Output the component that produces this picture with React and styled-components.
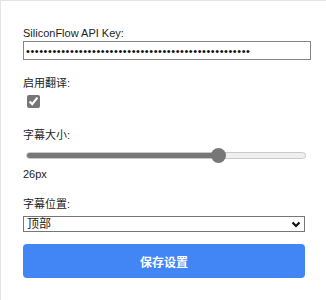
import React, { useState } from "react"
import styled, { createGlobalStyle } from "styled-components"

const GlobalStyle = createGlobalStyle`
  html, body {
    margin: 0;
    background: #fff;
  }
  body {
    font-family: "Liberation Sans", "Noto Sans CJK SC", sans-serif;
    font-size: 11px;
    color: #222;
    border-left: 1px solid #e4e4e4;
    border-top: 1px solid #e4e4e4;
    min-height: 299px;
  }
`

const Panel = styled.div`
  padding: 24px 21px 20px 22px;
`

const Group = styled.div`
  display: flex;
  flex-direction: column;
  align-items: flex-start;
  margin-bottom: ${p => p.$gap || 15}px;
`

const Label = styled.label`
  display: block;
  line-height: 16px;
  height: 16px;
`

const KeyInput = styled.input`
  width: 100%;
  height: 15px;
  padding: 1px 2px;
  margin: 0;
  border: 1px solid #858585;
  font-family: "Liberation Sans", sans-serif;
  font-size: 11px;
  color: #111;
  letter-spacing: 0.55px;
  outline: none;
`

const Check = styled.input`
  width: 13px;
  height: 13px;
  margin: 4px 3px 3px 4px;
  accent-color: #767676;
`

const Slider = styled.input`
  -webkit-appearance: none;
  appearance: none;
  width: 280px;
  height: 16px;
  margin: 4px 0 0 3px;
  background: transparent;
  outline: none;

  &::-webkit-slider-runnable-track {
    height: 7px;
    border-radius: 4px;
    border: 1px solid #c9c9c9;
    background: linear-gradient(to right, #777 0, #777 var(--fill), #efefef var(--fill), #efefef 100%);
  }
  &::-webkit-slider-thumb {
    -webkit-appearance: none;
    width: 15px;
    height: 15px;
    border-radius: 50%;
    background: #777;
    margin-top: -5px;
    border: none;
  }
`

const Value = styled.div`
  line-height: 16px;
  margin-top: 3px;
`

const SelectWrap = styled.div`
  position: relative;
  width: 100%;
  margin-top: 4px;
`

const Select = styled.select`
  -webkit-appearance: none;
  appearance: none;
  width: 100%;
  height: 16px;
  margin: 0;
  padding: 0 0 0 3px;
  border: 1px solid #767676;
  border-radius: 0;
  background: #fff;
  font-family: "Liberation Sans", "Noto Sans CJK SC", sans-serif;
  font-size: 12px;
  line-height: 14px;
  color: #222;
  outline: none;
`

const Chevron = styled.svg`
  position: absolute;
  right: 4px;
  top: 5px;
  pointer-events: none;
`

const SaveButton = styled.button`
  display: block;
  width: 100%;
  height: 34px;
  border: none;
  border-radius: 4px;
  background: #4285f4;
  color: #fff;
  font-family: "Liberation Sans", "Noto Sans CJK SC", sans-serif;
  font-size: 12px;
  font-weight: 600;
  cursor: pointer;
`

export default function App() {
  const [size, setSize] = useState(26)
  const min = 12
  const max = 32
  const frac = (size - min) / (max - min)

  return (
    <>
      <GlobalStyle />
      <Panel>
        <Group>
          <Label>SiliconFlow API Key:</Label>
          <KeyInput type="password" readOnly value={"sk-" + "x".repeat(48)} />
        </Group>
        <Group $gap={16}>
          <Label>启用翻译:</Label>
          <Check type="checkbox" defaultChecked />
        </Group>
        <Group $gap={14}>
          <Label>字幕大小:</Label>
          <Slider
            type="range"
            min={min}
            max={max}
            value={size}
            onChange={e => setSize(Number(e.target.value))}
            style={{ "--fill": `calc(7px + ${frac} * (100% - 15px))` }}
          />
          <Value>{size}px</Value>
        </Group>
        <Group $gap={12}>
          <Label>字幕位置:</Label>
          <SelectWrap>
            <Select defaultValue="top">
              <option value="top">顶部</option>
              <option value="bottom">底部</option>
            </Select>
            <Chevron width="10" height="7" viewBox="0 0 10 7">
              <polyline points="1.5,1.5 5,5 8.5,1.5" fill="none" stroke="#111" strokeWidth="2.2" />
            </Chevron>
          </SelectWrap>
        </Group>
        <SaveButton>保存设置</SaveButton>
      </Panel>
    </>
  )
}
